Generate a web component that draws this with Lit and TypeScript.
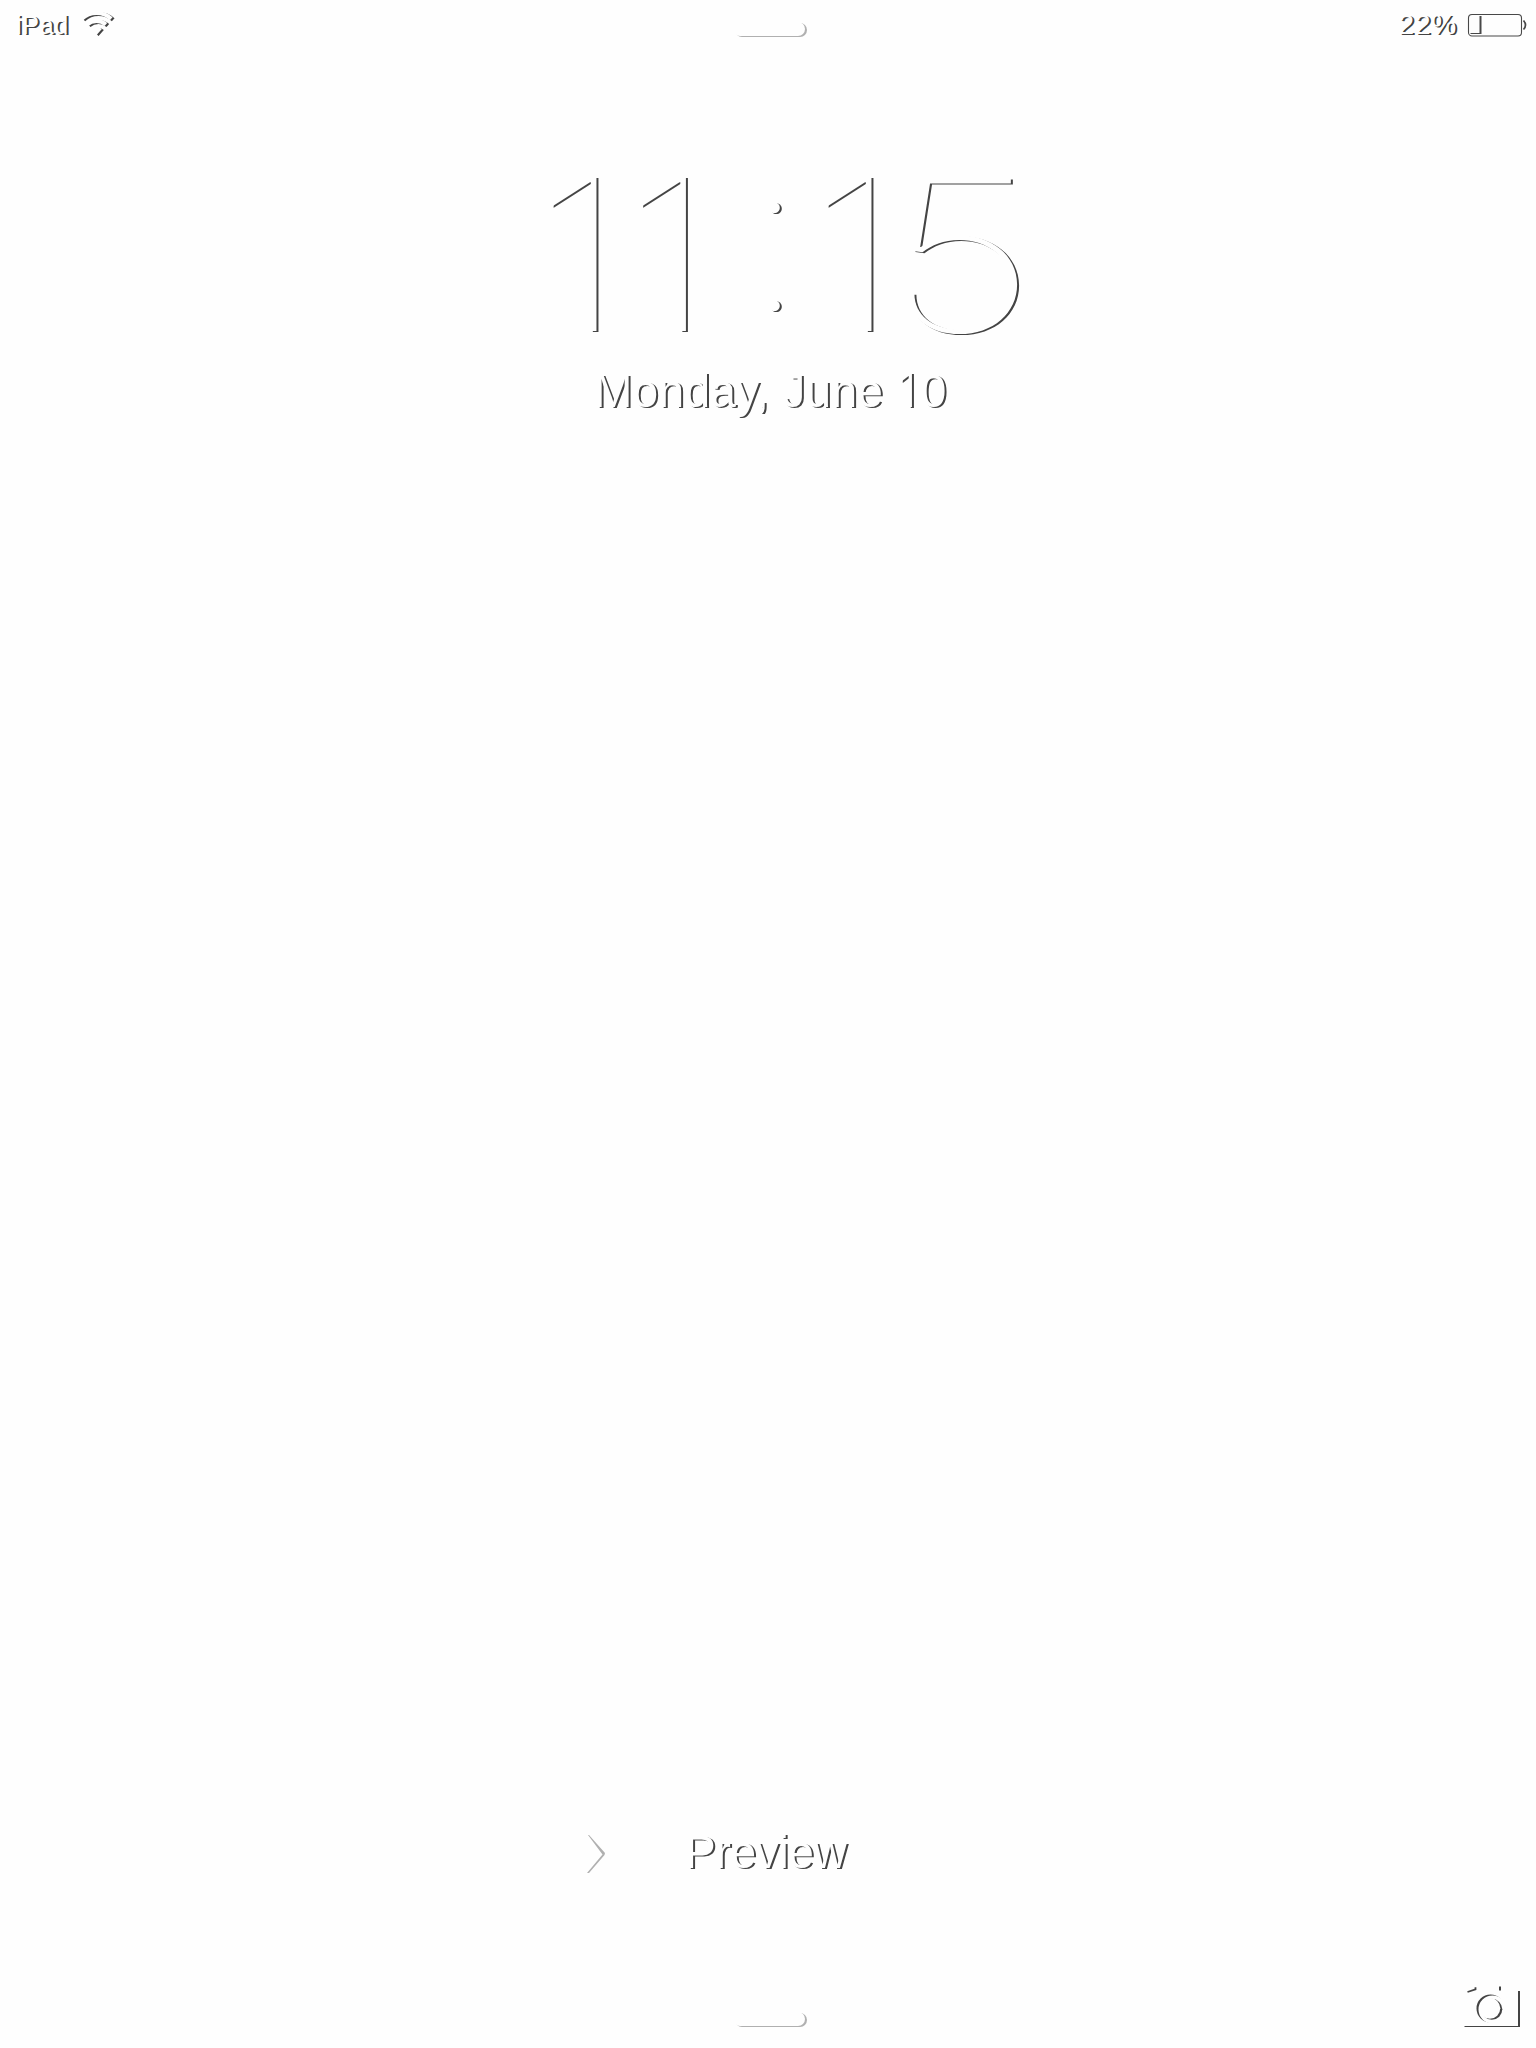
import { LitElement, html, svg, css } from "lit";

const digits = [
  { ch: "1", x: 534.2, y: 331, sx: 1.16 },
  { ch: "1", x: 623.7, y: 331, sx: 1.16 },
  { ch: "1", x: 809.3, y: 331, sx: 1.16 },
  { ch: "5", x: 886, y: 332, sx: 1.265 },
];

class AppRoot extends LitElement {
  static styles = css`
    :host {
      display: flex;
      flex-direction: column;
      box-sizing: border-box;
      width: 1536px;
      height: 2048px;
      background: #fefefe;
      color: #fefefe;
      font-family: "Liberation Sans", Arial, sans-serif;
      overflow: hidden;
    }
    svg { display: block; overflow: visible; }
    .status {
      display: grid;
      grid-template-columns: 1fr 74px 1fr;
      height: 50px;
      font-size: 25px;
      line-height: 50px;
      text-shadow: 2px 1px 0 #444;
    }
    .side { display: flex; align-items: flex-start; }
    .left { padding-left: 16px; gap: 13px; }
    .right { justify-content: flex-end; padding-right: 8px; gap: 10px; }
    .carrier { letter-spacing: 0.7px; }
    .percent { font-size: 28px; letter-spacing: 0.8px; }
    .pill {
      width: 72px;
      height: 14px;
      margin-left: 2px;
      border-radius: 7px;
      background: #fefefe;
      box-shadow: 2px 1px 0 #b0b0b0;
    }
    .status .pill { margin-top: 22px; }
    .clock { height: 310px; }
    .face {
      font-family: Inter, sans-serif;
      font-weight: 100;
      font-size: 211px;
      fill: #fefefe;
      filter: drop-shadow(2px 1px 0 #444);
    }
    .colon { font-size: 208px; font-weight: 100; }
    .date {
      height: 64px;
      line-height: 61px;
      padding-left: 594px;
      font-size: 46px;
      letter-spacing: 0.3px;
      text-shadow: 2px 1px 0 #444;
      white-space: nowrap;
    }
    .one { font-family: Inter, sans-serif; font-weight: 300; margin: 0 4px 0 2px; }
    .space { flex: 1; }
    .unlock {
      display: flex;
      align-items: center;
      height: 60px;
      padding-left: 586px;
      margin-bottom: 100px;
      font-size: 46px;
      gap: 77px;
    }
    .label { text-shadow: 2px 1px 0 #444; letter-spacing: -0.3px; }
    .bottom {
      display: grid;
      grid-template-columns: 1fr 74px 1fr;
      height: 66px;
    }
    .bottom .pill { margin-top: 30px; }
    .camera { justify-self: end; margin-right: 14px; }
    .raised { filter: drop-shadow(2px 1px 0 #444); }
  `;

  wedge(r0: number, r1: number) {
    const c = 0.743, s = 0.669;
    return svg`<path fill="#fefefe" d="M${14.5 - r1 * s} ${35 - r1 * c}A${r1} ${r1} 0 0 1 ${14.5 + r1 * s} ${35 - r1 * c}L${14.5 + r0 * s} ${35 - r0 * c}A${r0} ${r0} 0 0 0 ${14.5 - r0 * s} ${35 - r0 * c}Z"/>`;
  }

  render() {
    return html`
      <div class="status">
        <div class="side left">
          <span class="carrier">iPad</span>
          <svg class="raised" width="32" height="50">${this.wedge(20, 24)}${this.wedge(12, 16)}${this.wedge(0.1, 8)}</svg>
        </div>
        <div class="pill"></div>
        <div class="side right">
          <span class="percent">22%</span>
          <svg width="61" height="50" fill="none" stroke="#484848">
            <rect x="1.5" y="14.5" width="53" height="21.5" rx="3.5" stroke-width="1.1"/>
            <path d="M3.5 33.5H13" stroke-width="1"/>
            <path d="M13.5 16V34" stroke-width="2"/>
            <path d="M56.5 20.5Q60.5 25 56.5 29.5" stroke-width="1.7"/>
          </svg>
        </div>
      </div>
      <div class="clock">
        <svg width="1536" height="310" viewBox="0 50 1536 310">
          <g class="face">
            ${digits.map((d) => svg`<text transform="translate(${d.x} ${d.y}) scale(${d.sx} 1)">${d.ch}</text>`)}
            <text class="colon" x="774.5" y="310" text-anchor="middle">:</text>
          </g>
        </svg>
      </div>
      <div class="date">Monday, June <span class="one">1</span>0</div>
      <div class="space"></div>
      <div class="unlock">
        <svg width="22" height="42" fill="#b0b0b0"><path d="M3 4L19 22L18.500 24L3 42H1L16.500 23.500L2 4Z"/></svg>
        <span class="label">Preview</span>
      </div>
      <div class="bottom">
        <span></span>
        <div class="pill"></div>
        <svg class="camera" width="60" height="66" viewBox="1462 1982 60 66" fill="none" stroke="#444">
          <g class="raised" fill="#fefefe" stroke="none">
            <path fill-rule="evenodd" d="M1462.500 1990H1518V2026H1462.500ZM1476.500 2008.500a14 14 0 1 0 28 0a14 14 0 1 0 -28 0Z"/>
            <circle cx="1489.800" cy="2008.300" r="10.500"/>
          </g>
          <path d="M1467.500 1992L1475.500 1989.300V1987.200" stroke-width="1.800"/>
          <path d="M1500 1986.500V1990.500" stroke-width="2"/>
        </svg>
      </div>
    `;
  }
}
customElements.define("app-root", AppRoot);
